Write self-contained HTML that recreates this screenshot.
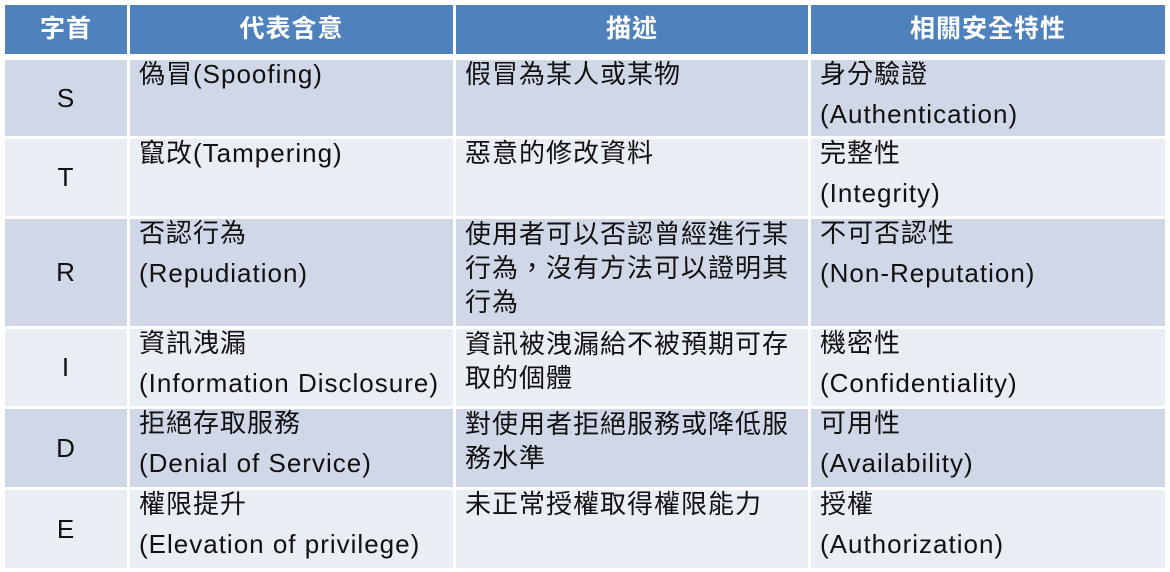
<!DOCTYPE html>
<html><head><meta charset="utf-8"><style>
body{margin:0;width:1170px;height:572px;background:#fff;position:relative;overflow:hidden;font-family:"Liberation Sans","Noto Sans CJK TC",sans-serif;}
.c{position:absolute;box-sizing:border-box;font-size:26px;letter-spacing:1px;line-height:40px;color:#111;padding-left:9px;white-space:nowrap}
.h{background:#4F81BD;color:#fff;font-weight:bold;text-align:center;padding:0;line-height:49px;font-size:25px;letter-spacing:1px}
.d{background:#D0D8E8}.l{background:#E9EDF4}
.k{text-align:center;padding:0}
.t{margin-top:-6px}
.t2{line-height:34px;margin-top:-2px}
</style></head><body>
<div class="c h" style="left:5px;top:5px;width:122px;height:49px">字首</div>
<div class="c h" style="left:130px;top:5px;width:323px;height:49px">代表含意</div>
<div class="c h" style="left:456px;top:5px;width:352px;height:49px">描述</div>
<div class="c h" style="left:811px;top:5px;width:354px;height:49px">相關安全特性</div>

<div class="c d k" style="left:5px;top:60px;width:122px;height:76px;line-height:76px">S</div>
<div class="c d" style="left:130px;top:60px;width:323px;height:76px"><div class="t">偽冒(Spoofing)</div></div>
<div class="c d" style="left:456px;top:60px;width:352px;height:76px"><div class="t">假冒為某人或某物</div></div>
<div class="c d" style="left:811px;top:60px;width:354px;height:76px"><div class="t">身分驗證<br>(Authentication)</div></div>

<div class="c l k" style="left:5px;top:139px;width:122px;height:77px;line-height:77px">T</div>
<div class="c l" style="left:130px;top:139px;width:323px;height:77px"><div class="t">竄改(Tampering)</div></div>
<div class="c l" style="left:456px;top:139px;width:352px;height:77px"><div class="t">惡意的修改資料</div></div>
<div class="c l" style="left:811px;top:139px;width:354px;height:77px"><div class="t">完整性<br>(Integrity)</div></div>

<div class="c d k" style="left:5px;top:219px;width:122px;height:107px;line-height:107px">R</div>
<div class="c d" style="left:130px;top:219px;width:323px;height:107px"><div class="t">否認行為<br>(Repudiation)</div></div>
<div class="c d" style="left:456px;top:219px;width:352px;height:107px"><div class="t2">使用者可以否認曾經進行某<br>行為，沒有方法可以證明其<br>行為</div></div>
<div class="c d" style="left:811px;top:219px;width:354px;height:107px"><div class="t">不可否認性<br>(Non-Reputation)</div></div>

<div class="c l k" style="left:5px;top:329px;width:122px;height:77px;line-height:77px">I</div>
<div class="c l" style="left:130px;top:329px;width:323px;height:77px"><div class="t">資訊洩漏<br>(Information Disclosure)</div></div>
<div class="c l" style="left:456px;top:329px;width:352px;height:77px"><div class="t2">資訊被洩漏給不被預期可存<br>取的個體</div></div>
<div class="c l" style="left:811px;top:329px;width:354px;height:77px"><div class="t">機密性<br>(Confidentiality)</div></div>

<div class="c d k" style="left:5px;top:409px;width:122px;height:78px;line-height:78px">D</div>
<div class="c d" style="left:130px;top:409px;width:323px;height:78px"><div class="t">拒絕存取服務<br>(Denial of Service)</div></div>
<div class="c d" style="left:456px;top:409px;width:352px;height:78px"><div class="t2">對使用者拒絕服務或降低服<br>務水準</div></div>
<div class="c d" style="left:811px;top:409px;width:354px;height:78px"><div class="t">可用性<br>(Availability)</div></div>

<div class="c l k" style="left:5px;top:490px;width:122px;height:78px;line-height:78px">E</div>
<div class="c l" style="left:130px;top:490px;width:323px;height:78px"><div class="t">權限提升<br>(Elevation of privilege)</div></div>
<div class="c l" style="left:456px;top:490px;width:352px;height:78px"><div class="t">未正常授權取得權限能力</div></div>
<div class="c l" style="left:811px;top:490px;width:354px;height:78px"><div class="t">授權<br>(Authorization)</div></div>
</body></html>
